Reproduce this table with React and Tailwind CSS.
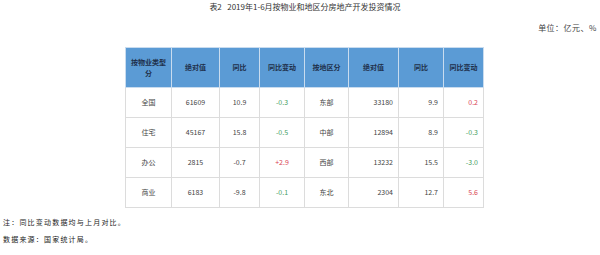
import React from 'react';

const left = [
  { name: '全国', abs: '61609', yoy: '10.9', chg: '-0.3' },
  { name: '住宅', abs: '45167', yoy: '15.8', chg: '-0.5' },
  { name: '办公', abs: '2815', yoy: '-0.7', chg: '+2.9' },
  { name: '商业', abs: '6183', yoy: '-9.8', chg: '-0.1' },
];

const right = [
  { name: '东部', abs: '33180', yoy: '9.9', chg: '0.2' },
  { name: '中部', abs: '12894', yoy: '8.9', chg: '-0.3' },
  { name: '西部', abs: '13232', yoy: '15.5', chg: '-3.0' },
  { name: '东北', abs: '2304', yoy: '12.7', chg: '5.6' },
];

const chgColor = (v) => (v.startsWith('-') ? 'text-[#3f9e62]' : 'text-[#d94452]');

const headers = ['按物业类型分', '绝对值', '同比', '同比变动', '按地区分', '绝对值', '同比', '同比变动'];
const widths = [46, 48, 40, 45, 44, 50, 45, 40];

export default function App() {
  return (
    <div
      className="w-[600px] h-[255px] bg-white text-[#333] overflow-hidden"
      style={{ fontFamily: '"Noto Sans CJK SC", "Noto Sans", sans-serif' }}
    >
      {/* Title */}
      <div className="h-[14px] pl-[10px] text-center text-[8px] leading-[14px] text-[#333]">
        表2&nbsp;&nbsp;&nbsp;2019年1-6月按物业和地区分房地产开发投资情况
      </div>

      {/* Unit */}
      <div className="mt-[8px] h-[12px] pr-[3px] text-right text-[8px] leading-[12px] tracking-[0.5px] text-[#444]">
        单位：亿元、%
      </div>

      {/* Table */}
      <div className="mt-[13px] ml-[125px]">
        <table className="table-fixed border-collapse w-[358px] text-[7px]">
          <colgroup>
            {widths.map((w, i) => (
              <col key={i} style={{ width: w }} />
            ))}
          </colgroup>
          <thead>
            <tr className="h-[40px] bg-[#5b9bd5]">
              {headers.map((h, i) => (
                <th
                  key={i}
                  className="border border-[#c9dcef] px-[4px] text-center font-bold leading-[11px] text-[#1e2f4a]"
                >
                  {h}
                </th>
              ))}
            </tr>
          </thead>
          <tbody>
            {left.map((l, i) => {
              const r = right[i];
              return (
                <tr key={i} className="h-[30px] text-[#444]">
                  <td className="border border-[#dcdcdc] text-center">{l.name}</td>
                  <td className="border border-[#dcdcdc] text-center">{l.abs}</td>
                  <td className="border border-[#dcdcdc] text-center">{l.yoy}</td>
                  <td className={`border border-[#dcdcdc] text-center ${chgColor(l.chg)}`}>{l.chg}</td>
                  <td className="border border-[#dcdcdc] text-center">{r.name}</td>
                  <td className="border border-[#dcdcdc] text-right pr-[5px]">{r.abs}</td>
                  <td className="border border-[#dcdcdc] text-right pr-[5px]">{r.yoy}</td>
                  <td className={`border border-[#dcdcdc] text-right pr-[5px] ${chgColor(r.chg)}`}>{r.chg}</td>
                </tr>
              );
            })}
          </tbody>
        </table>
      </div>

      {/* Notes */}
      <div className="mt-[8px] pl-[3px] text-[7px] leading-[12px] tracking-[1.2px] text-[#222]">
        <div>注：同比变动数据均与上月对比。</div>
        <div className="mt-[5px]">数据来源：国家统计局。</div>
      </div>
    </div>
  );
}
